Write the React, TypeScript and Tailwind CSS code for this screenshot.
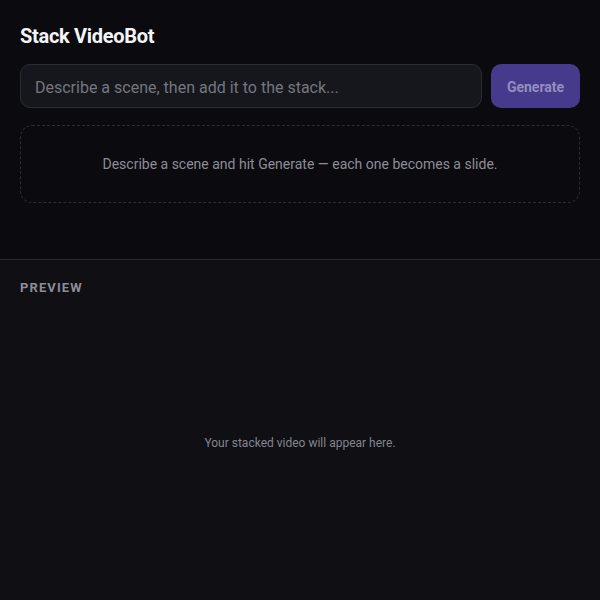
export default function App() {
  return (
    <div className="flex h-[600px] w-[600px] flex-col bg-[#0f0f14] font-['Roboto',sans-serif] text-white">
      <section className="flex h-[260px] flex-col border-b border-[#2a2a31] bg-[#0b0b0f] px-5 pt-[23px]">
        <h1 className="text-[20px] font-bold leading-[26px] tracking-[-0.3px] text-[#f4f4f6]">
          Stack VideoBot
        </h1>
        <div className="mt-[15px] flex gap-[9px]">
          <input
            type="text"
            placeholder="Describe a scene, then add it to the stack..."
            className="h-[44px] flex-1 rounded-[10px] border border-[#2b2c33] bg-[#16171c] px-[14px] pt-[2px] text-[16px] text-white outline-none placeholder:text-[#75767e]"
          />
          <button
            type="button"
            className="h-[44px] w-[89px] rounded-[10px] bg-[#463a8c] pt-[2px] text-[14px] font-bold text-[#958fbd]"
          >
            Generate
          </button>
        </div>
        <div className="mt-[17px] flex h-[78px] items-center justify-center rounded-[12px] border border-dashed border-[#2c2d34] text-[14px] text-[#8d8d97]">
          Describe a scene and hit Generate — each one becomes a slide.
        </div>
      </section>
      <section className="flex flex-1 flex-col px-5 pt-[20px] pb-5">
        <h2 className="text-[13px] font-bold leading-[16px] tracking-[1.1px] text-[#8c8b96]">
          PREVIEW
        </h2>
        <div className="flex flex-1 items-center justify-center pt-[10px]">
          <p className="text-[12px] text-[#85848e]">Your stacked video will appear here.</p>
        </div>
      </section>
    </div>
  )
}
